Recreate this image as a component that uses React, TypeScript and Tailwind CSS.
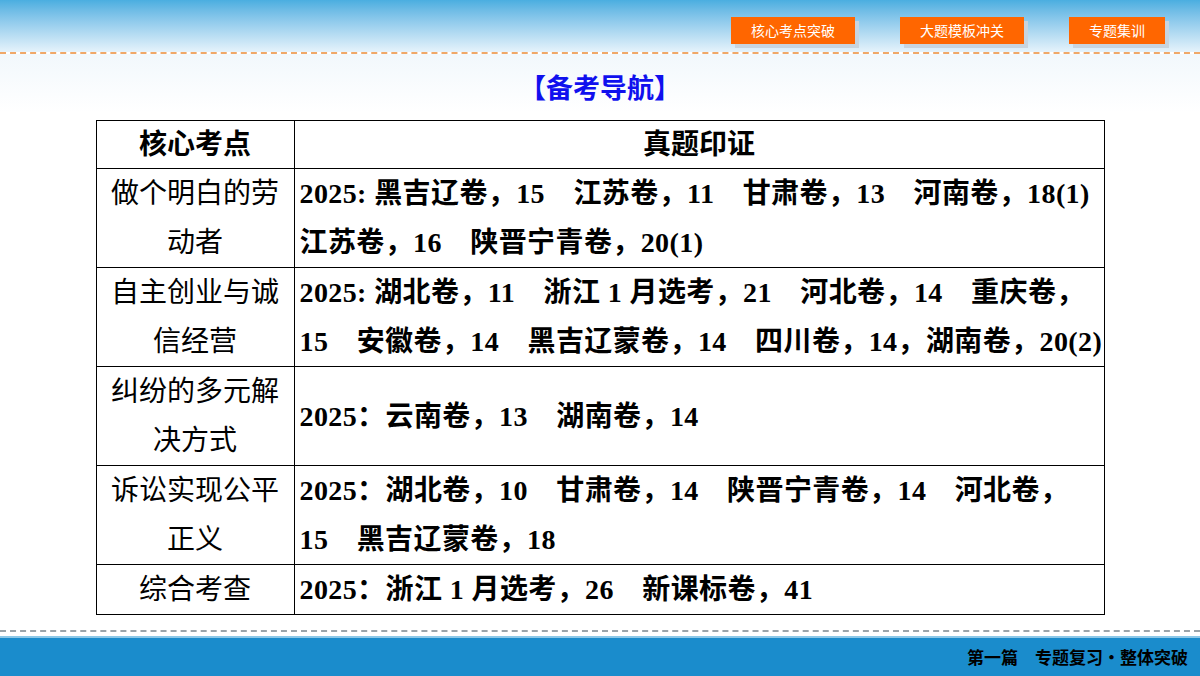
const rows: [string, string[]][] = [
  ["做个明白的劳动者", ["2025: 黑吉辽卷，15　江苏卷，11　甘肃卷，13　河南卷，18(1)", "江苏卷，16　陕晋宁青卷，20(1)"]],
  ["自主创业与诚信经营", ["2025: 湖北卷，11　浙江 1 月选考，21　河北卷，14　重庆卷，", "15　安徽卷，14　黑吉辽蒙卷，14　四川卷，14，湖南卷，20(2)"]],
  ["纠纷的多元解决方式", ["2025：云南卷，13　湖南卷，14"]],
  ["诉讼实现公平正义", ["2025：湖北卷，10　甘肃卷，14　陕晋宁青卷，14　河北卷，", "15　黑吉辽蒙卷，18"]],
  ["综合考查", ["2025：浙江 1 月选考，26　新课标卷，41"]],
];

function Btn({ label }: { label: string }) {
  return (
    <div className="bg-[#ff6600] text-white text-[14px] px-[20px] h-[27px] flex items-center shadow-[4px_4px_0_#c8d4de]">
      {label}
    </div>
  );
}

export default function App() {
  return (
    <div
      className="w-[1200px] h-[676px] flex flex-col bg-white text-black"
      style={{ fontFamily: '"Liberation Serif", "Noto Sans CJK SC", serif' }}
    >
      <div className="h-[52px] bg-gradient-to-b from-[#4aaee0] to-[#e6f3fb] flex items-start justify-end pt-[17px] pr-[35px] gap-[45px]"
        style={{ fontFamily: '"Noto Sans CJK SC", sans-serif' }}>
        <Btn label="核心考点突破" />
        <Btn label="大题模板冲关" />
        <Btn label="专题集训" />
      </div>
      <div className="border-t-2 border-dashed border-[#f0a868]" />
      <div className="flex-1 bg-gradient-to-b from-[#f2f8fc] to-white to-[10%] flex flex-col items-center">
        <div className="mt-[13px] h-[40px] text-[27px] font-bold text-[#1010ee] leading-[40px]" style={{ fontFamily: '"Noto Sans CJK SC", sans-serif' }}>
          【备考导航】
        </div>
        <table className="mt-[13px] w-[1009px] border-collapse border border-black text-[28px]">
          <tbody>
            <tr className="h-[48px]">
              <th className="w-[198px] border border-black font-bold">核心考点</th>
              <th className="border border-black font-bold">真题印证</th>
            </tr>
            {rows.map(([k, v], i) => (
              <tr key={i} className={v.length > 1 || i === 2 ? "h-[98px]" : "h-[49px]"}>
                <td className="border border-black text-center leading-[49px] px-0 whitespace-nowrap">
                  {k.length > 6 ? (<>{k.slice(0, 6)}<br />{k.slice(6)}</>) : k}
                </td>
                <td className="border border-black font-bold leading-[49px] pl-[5px] whitespace-nowrap tracking-[0.4px]">
                  {v.map((l, j) => <div key={j}>{l}</div>)}
                </td>
              </tr>
            ))}
          </tbody>
        </table>
        <div className="mt-auto w-full border-t-2 border-dashed border-[#9aa4aa] mb-[4px]" />
      </div>
      <div className="h-[40px] bg-[#1a8ccc] border-t-2 border-[#8cc8e8] flex items-center justify-end pr-[12px] text-[17px] font-bold text-black"
        style={{ fontFamily: '"Noto Sans CJK SC", sans-serif' }}>
        第一篇　专题复习·整体突破
      </div>
    </div>
  );
}
